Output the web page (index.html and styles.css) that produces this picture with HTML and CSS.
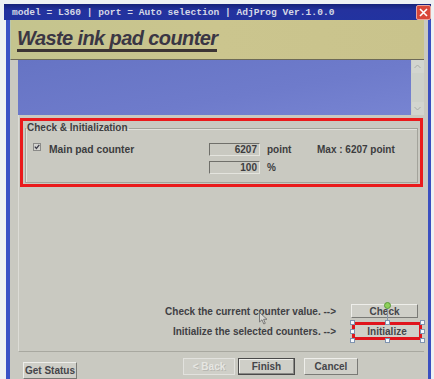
FILE: index.html
```html
<!DOCTYPE html>
<html>
<head>
<meta charset="utf-8">
<title>Waste ink pad counter</title>
<link rel="stylesheet" href="styles.css">
</head>
<body>
<div class="window">
  <div class="titlebar">
    <span class="title-text">model = L360 | port = Auto selection | AdjProg Ver.1.0.0</span>
    <span class="close"><svg width="9" height="9" viewBox="0 0 9 9"><path d="M1 1 L8 8 M8 1 L1 8" stroke="#fff" stroke-width="1.6" fill="none"/></svg></span>
  </div>
  <div class="frame">
    <div class="header"><span class="heading">Waste ink pad counter</span></div>
    <div class="page">
      <div class="log">
        <div class="log-area"></div>
        <div class="scrollbar">
          <span class="sb-btn"><svg width="7" height="5" viewBox="0 0 7 5"><path d="M0.5 4 L3.5 1 L6.5 4" stroke="#a8aca8" fill="none"/></svg></span>
          <span class="sb-track"></span>
          <span class="sb-btn"><svg width="7" height="5" viewBox="0 0 7 5"><path d="M0.5 1 L3.5 4 L6.5 1" stroke="#a8aca8" fill="none"/></svg></span>
        </div>
      </div>
      <div class="highlight">
        <fieldset class="group">
          <legend>Check &amp; Initialization</legend>
          <div class="grid">
            <span class="check"><svg width="8" height="8" viewBox="0 0 8 8"><rect x="0.5" y="0.5" width="7" height="7" fill="#d4d4d0" stroke="#8a8a88"/><path d="M1.8 3.6 L3.4 5.4 L6.3 1.8" stroke="#3a3a48" stroke-width="1.3" fill="none"/></svg></span>
            <span class="lbl">Main pad counter</span>
            <span class="field">6207</span>
            <span class="unit">point</span>
            <span class="max">Max : 6207 point</span>
            <span></span>
            <span></span>
            <span class="field">100</span>
            <span class="unit">%</span>
            <span></span>
          </div>
        </fieldset>
      </div>
      <div class="spacer"></div>
      <div class="actions">
        <span class="hint">Check the current counter value. --&gt;</span>
        <span class="btn check-btn">Check</span>
        <span class="hint">Initialize the selected counters. --&gt;</span>
        <span class="selwrap">
          <span class="btn init-btn">Initialize</span>
          <span class="rot-line"></span>
          <span class="rot-handle"></span>
          <span class="h h-tl"></span><span class="h h-tm"></span><span class="h h-tr"></span>
          <span class="h h-ml"></span><span class="h h-mr"></span>
          <span class="h h-bl"></span><span class="h h-bm"></span><span class="h h-br"></span>
        </span>
      </div>
      <svg class="cursor" width="9" height="13" viewBox="0 0 9 13"><path d="M0.5 0.5 L0.5 10 L3 7.8 L4.8 12 L6.3 11.3 L4.6 7.3 L8 7.3 Z" fill="#d8d8d4" stroke="#707070" stroke-width="0.9"/></svg>
    </div>
    <div class="footer">
      <span class="btn getstatus">Get Status</span>
      <span class="nav">
        <span class="btn back">&lt; Back</span>
        <span class="btn finish">Finish</span>
        <span class="btn cancel">Cancel</span>
      </span>
    </div>
  </div>
</div>
</body>
</html>
```

FILE: styles.css
```css
html, body {
  margin: 0;
  height: 100%;
  overflow: hidden;
}
body {
  background: #eef1f3;
  padding: 4px 0 0 4px;
  box-sizing: border-box;
  font-family: "Liberation Sans", Arial, sans-serif;
  font-weight: bold;
  font-size: 10px;
  color: #3c3c3e;
}
.window {
  width: 427px;
}
.titlebar {
  height: 16px;
  display: flex;
  align-items: center;
  justify-content: space-between;
  background: linear-gradient(#16227a, #24329e 40%, #2233a0);
}
.title-text {
  font-family: "Liberation Mono", "DejaVu Sans Mono", monospace;
  font-size: 9.6px;
  font-weight: bold;
  color: #d4d8e6;
  padding-left: 8px;
  white-space: pre;
}
.close {
  width: 15px;
  height: 15px;
  background: #d9473a;
  border: 1px solid #e9a49c;
  border-radius: 2px;
  box-sizing: border-box;
  display: flex;
  align-items: center;
  justify-content: center;
}
.frame {
  margin-left: 2px;
  border-left: 4px solid #3a52c6;
  border-right: 3px solid #3a4fc0;
  background: #c9c9c1;
  height: 359px;
  overflow: hidden;
  display: flex;
  flex-direction: column;
}
.header {
  height: 39px;
  margin: 0 4px 0 0;
  background: linear-gradient(90deg, #c4c48e, #cbc58e 50%, #c9c38c);
  border-left: 1px solid #b9c7ae;
  border-bottom: 1px solid #6d6a58;
  display: flex;
  align-items: flex-start;
  padding-left: 6px;
  flex: none;
}
.heading {
  font-family: "Liberation Sans", Arial, sans-serif;
  font-style: italic;
  font-weight: bold;
  font-size: 20px;
  letter-spacing: -0.6px;
  line-height: 22px;
  color: #3a3644;
  margin-top: 7px;
  border-bottom: 3px solid #3c3434;
}
.page {
  position: relative;
  margin: 0 4px 0 8px;
  height: 292px;
  box-sizing: border-box;
  border-left: 1px solid #dcdcd6;
  border-bottom: 1px solid #a8a8a0;
  display: flex;
  flex-direction: column;
  flex: none;
}
.log {
  height: 55px;
  display: flex;
  flex: none;
  margin-left: -1px;
}
.log-area {
  flex: 1;
  background: linear-gradient(170deg, #6674c4, #6e7bcb 60%, #7784d2);
}
.scrollbar {
  width: 13px;
  background: #cdd1ca;
  display: flex;
  flex-direction: column;
  align-items: center;
}
.sb-btn {
  height: 13px;
  width: 12px;
  display: flex;
  align-items: center;
  justify-content: center;
  background: #d2d5cf;
}
.sb-track {
  flex: 1;
}
.highlight {
  margin: 3px 1px 0 1px;
  height: 69px;
  box-sizing: border-box;
  border: 3px solid #ea1a1c;
  flex: none;
}
.group {
  margin: 1px 2px 0 2px;
  padding: 0 0 8px 7px;
  border: 1px solid #a3a39b;
  box-shadow: inset 1px 1px 0 #e2e2dc;
  min-width: 0;
}
.group legend {
  padding: 0 1px;
  margin-left: -7px;
  line-height: 12px;
  font-size: 10px;
  color: #3e3e42;
}
.grid {
  display: grid;
  grid-template-columns: 8px 168px 51px 57px auto;
  grid-template-rows: 13px 13px;
  row-gap: 5px;
  margin-top: 9px;
  align-items: center;
}
.check {
  display: flex;
  align-self: start;
}
.lbl {
  padding-left: 8px;
  font-size: 10.3px;
}
.field {
  height: 13px;
  box-sizing: border-box;
  border-top: 1px solid #6f6f6a;
  border-left: 1px solid #6f6f6a;
  border-right: 1px solid #e4e4de;
  border-bottom: 1px solid #e4e4de;
  text-align: right;
  padding-right: 2px;
  line-height: 12px;
}
.unit {
  padding-left: 7px;
}
.spacer {
  flex: 1;
}
.actions {
  display: grid;
  grid-template-columns: 1fr 71px;
  grid-template-rows: 14px 18px;
  column-gap: 15px;
  row-gap: 4px;
  margin: 0 2px 11px 0;
  align-items: center;
  flex: none;
}
.hint {
  text-align: right;
  color: #404044;
}
.btn {
  display: flex;
  align-items: center;
  justify-content: center;
  box-sizing: border-box;
  background: #cfcfc8;
  border-top: 1px solid #eeeeea;
  border-left: 1px solid #eeeeea;
  border-right: 1px solid #7a7a76;
  border-bottom: 1px solid #7a7a76;
  color: #45454a;
  font-size: 10px;
}
.check-btn {
  width: 67px;
  height: 14px;
}
.selwrap {
  position: relative;
  width: 70px;
  height: 18px;
  margin-left: 1px;
}
.init-btn {
  width: 70px;
  height: 18px;
  border: 3px solid #e0141c;
  background: #d0d0c9;
}
.h {
  position: absolute;
  width: 5px;
  height: 5px;
  box-sizing: border-box;
  background: #f6f8fb;
  border: 1px solid #7f93b0;
}
.h-tl { left: -2px; top: -2px; }
.h-tm { left: 33px; top: -2px; }
.h-tr { left: 68px; top: -2px; }
.h-ml { left: -2px; top: 7px; }
.h-mr { left: 68px; top: 7px; }
.h-bl { left: -2px; top: 16px; }
.h-bm { left: 33px; top: 16px; }
.h-br { left: 68px; top: 16px; }
.rot-line {
  position: absolute;
  left: 35px;
  top: -16px;
  width: 1px;
  height: 15px;
  background: #7f93b0;
}
.rot-handle {
  position: absolute;
  left: 32px;
  top: -20px;
  width: 7px;
  height: 7px;
  box-sizing: border-box;
  border-radius: 50%;
  background: #8fd05a;
  border: 1px solid #5a9a3a;
}
.cursor {
  position: absolute;
  left: 240px;
  top: 252px;
}
.footer {
  display: flex;
  align-items: flex-start;
  flex: none;
}
.getstatus {
  margin: 10px 0 0 13px;
  width: 54px;
  height: 17px;
}
.nav {
  display: flex;
  margin: 6px 0 0 106px;
}
.back {
  width: 52px;
  height: 17px;
  color: #e6e6e2;
  text-shadow: 1px 1px 0 #b8b8b2;
  border-color: #e2e2de;
}
.finish {
  width: 57px;
  height: 17px;
  margin-left: 3px;
  border: 1px solid #4a4a4a;
  box-shadow: inset -1px -1px 0 #8a8a86, inset 1px 1px 0 #eeeeea;
}
.cancel {
  width: 54px;
  height: 17px;
  margin-left: 9px;
}
```
